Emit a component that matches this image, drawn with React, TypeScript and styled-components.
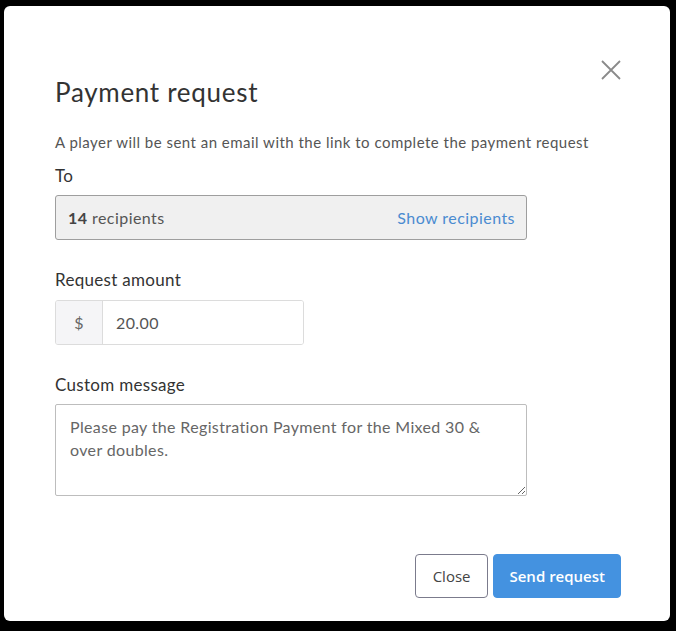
import * as React from 'react';
import styled, { createGlobalStyle } from 'styled-components';

const GlobalStyle = createGlobalStyle`
  html, body {
    margin: 0;
    padding: 0;
    background: #000;
  }
  body {
    font-family: Lato, "Noto Sans", sans-serif;
  }
`;

const Backdrop = styled.div`
  width: 676px;
  height: 631px;
  box-sizing: border-box;
  padding: 6px 6px 10px 4px;
  background: #000;
`;

const Modal = styled.div`
  position: relative;
  height: 615px;
  box-sizing: border-box;
  background: #fff;
  border-radius: 6px;
  padding: 70px 49px 23px 51px;
  display: flex;
  flex-direction: column;
`;

const CloseIcon = styled.button`
  position: absolute;
  top: 52px;
  right: 47px;
  width: 24px;
  height: 24px;
  padding: 0;
  border: none;
  background: none;
  display: flex;
  align-items: center;
  justify-content: center;
  cursor: pointer;
`;

const Title = styled.h2`
  margin: 0;
  font-size: 26px;
  line-height: 32px;
  font-weight: 400;
  letter-spacing: 0.7px;
  color: #333;
`;

const Description = styled.p`
  margin: 24px 0 0;
  font-size: 15px;
  line-height: 20px;
  letter-spacing: 0.48px;
  color: #555;
`;

const Label = styled.label<{ gap: number }>`
  display: block;
  margin-top: ${p => p.gap}px;
  font-size: 17px;
  line-height: 20px;
  letter-spacing: 0.3px;
  color: #333;
`;

const Form = styled.div`
  width: 472px;
  display: flex;
  flex-direction: column;
`;

const RecipientsBox = styled.div`
  margin-top: 9px;
  height: 45px;
  box-sizing: border-box;
  display: flex;
  align-items: center;
  justify-content: space-between;
  padding: 0 11px 0 12px;
  background: #f0f0f0;
  border: 1px solid #9e9e9e;
  border-radius: 3px;
  font-size: 16px;
  letter-spacing: 0.45px;
  color: #555;
`;

const Count = styled.strong`
  font-weight: 700;
  color: #444;
`;

const LinkText = styled.span`
  color: #4a8bd0;
  cursor: pointer;
`;

const AmountGroup = styled.div`
  margin-top: 10px;
  width: 249px;
  height: 45px;
  box-sizing: border-box;
  display: flex;
  border: 1px solid #dcdcdc;
  border-radius: 3px;
  overflow: hidden;
`;

const Addon = styled.span`
  width: 46px;
  display: flex;
  align-items: center;
  justify-content: center;
  background: #f5f5f7;
  border-right: 1px solid #dcdcdc;
  font-size: 16px;
  color: #666;
`;

const AmountInput = styled.input`
  flex: 1;
  min-width: 0;
  border: none;
  outline: none;
  padding: 0 13px;
  font-family: Lato, sans-serif;
  font-size: 16px;
  letter-spacing: 0.4px;
  color: #555;
  background: #fff;
`;

const Message = styled.textarea`
  margin-top: 9px;
  height: 92px;
  box-sizing: border-box;
  padding: 10px 14px;
  border: 1px solid #bdbdbd;
  border-radius: 2px;
  font-family: Lato, sans-serif;
  font-size: 16px;
  line-height: 23px;
  letter-spacing: 0.35px;
  color: #666;
  outline: none;
`;

const Footer = styled.div`
  margin-top: auto;
  display: flex;
  justify-content: flex-end;
  gap: 5px;
`;

const Button = styled.button<{ primary?: boolean }>`
  height: 44px;
  box-sizing: border-box;
  padding: 0 ${p => (p.primary ? 15 : 17)}px;
  border-radius: 4px;
  font-family: "Open Sans", sans-serif;
  font-size: 15px;
  font-weight: ${p => (p.primary ? 600 : 500)};
  cursor: pointer;
  border: 1px solid ${p => (p.primary ? '#4492e0' : '#7b7b8c')};
  background: ${p => (p.primary ? '#4492e0' : '#fff')};
  color: ${p => (p.primary ? '#fff' : '#444')};
`;

const App = () => {
  return (
    <Backdrop>
      <GlobalStyle />
      <Modal>
        <CloseIcon aria-label="Close">
          <svg width="20" height="20" viewBox="0 0 20 20">
            <path d="M1 1 L19 19 M19 1 L1 19" stroke="#8a8a8a" strokeWidth="1.8" fill="none" />
          </svg>
        </CloseIcon>
        <Title>Payment request</Title>
        <Description>
          A player will be sent an email with the link to complete the payment request
        </Description>
        <Form>
          <Label gap={14}>To</Label>
          <RecipientsBox>
            <span>
              <Count>14</Count> recipients
            </span>
            <LinkText>Show recipients</LinkText>
          </RecipientsBox>

          <Label gap={30}>Request amount</Label>
          <AmountGroup>
            <Addon>$</Addon>
            <AmountInput defaultValue="20.00" />
          </AmountGroup>

          <Label gap={30}>Custom message</Label>
          <Message defaultValue="Please pay the Registration Payment for the Mixed 30 & over doubles." />
        </Form>
        <Footer>
          <Button>Close</Button>
          <Button primary>Send request</Button>
        </Footer>
      </Modal>
    </Backdrop>
  );
};

export default App;
